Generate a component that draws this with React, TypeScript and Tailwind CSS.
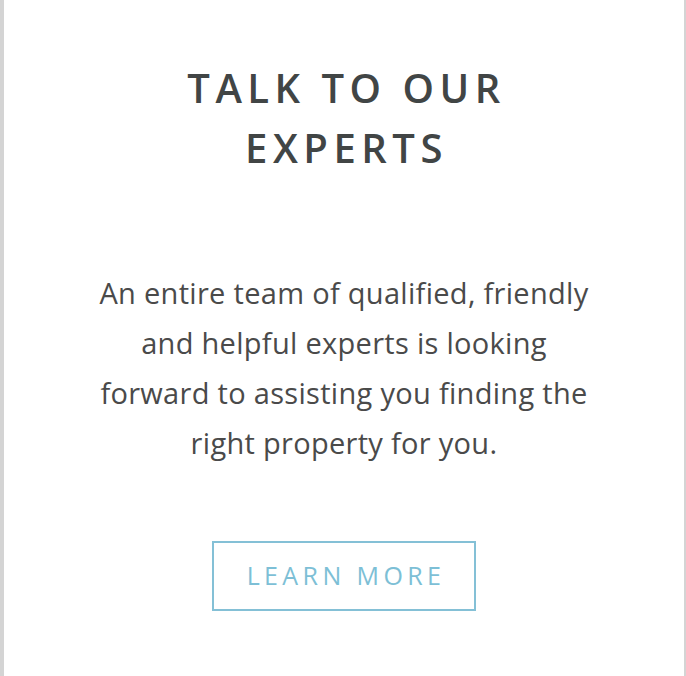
export default function App() {
  return (
    <div className="w-[686px] h-[676px] bg-white border-l-4 border-r-2 border-[#d4d4d4] flex flex-col items-center" style={{ fontFamily: '"Open Sans", "Liberation Sans", sans-serif' }}>
      <h1 className="mt-[58px] pl-[5px] text-center text-[40px] leading-[60px] font-semibold tracking-[5.5px] text-[#414545]">
        TALK TO OUR
        <br />
        EXPERTS
      </h1>
      <p className="mt-[90px] text-center text-[29px] leading-[50px] tracking-[0.3px] text-[#4a4a4a]">
        An entire team of qualified, friendly
        <br />
        and helpful experts is looking
        <br />
        forward to assisting you finding the
        <br />
        right property for you.
      </p>
      <button className="mt-[73px] w-[264px] h-[70px] pl-[4px] border-2 border-[#84c0d6] flex items-center justify-center text-[25px] tracking-[4.4px] text-[#7dbfd6]">
        LEARN MORE
      </button>
    </div>
  )
}
